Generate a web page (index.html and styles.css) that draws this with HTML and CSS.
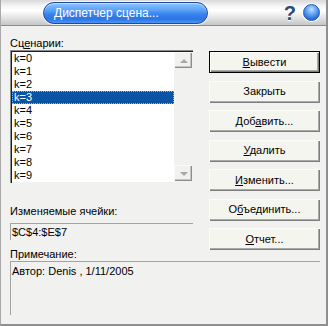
FILE: index.html
```html
<!DOCTYPE html>
<html lang="ru">
<head>
    <meta charset="UTF-8">
    <meta name="viewport" content="width=device-width, initial-scale=1.0">
    <title>Диспетчер сценариев</title>
    <link rel="stylesheet" href="styles.css">
</head>
<body>
    <div class="dialog">
        <header class="titlebar">
            <div class="title-pill">Диспетчер сцена...</div>
            <div class="title-tools">
                <span class="help">?</span>
                <span class="close"></span>
            </div>
        </header>

        <main class="client">
            <div class="left">
                <div class="label">Сц<u>е</u>нарии:</div>
                <div class="listbox">
                    <ul class="items">
                        <li>k=0</li>
                        <li>k=1</li>
                        <li>k=2</li>
                        <li class="selected">k=3</li>
                        <li>k=4</li>
                        <li>k=5</li>
                        <li>k=6</li>
                        <li>k=7</li>
                        <li>k=8</li>
                        <li>k=9</li>
                    </ul>
                    <div class="scrollbar">
                        <span class="sb-btn"><span class="arrow up"></span></span>
                        <span class="sb-btn"><span class="arrow down"></span></span>
                    </div>
                </div>

                <div class="label label-cells">Изменяемые ячейки:</div>
                <div class="field">$C$4:$E$7</div>

                <div class="label label-note">Примечание:</div>
            </div>

            <div class="buttons">
                <button class="btn default"><u>В</u>ывести</button>
                <button class="btn">Закрыть</button>
                <button class="btn">Доб<u>а</u>вить...</button>
                <button class="btn"><u>У</u>далить</button>
                <button class="btn"><u>И</u>зменить...</button>
                <button class="btn">О<u>б</u>ъединить...</button>
                <button class="btn"><u>О</u>тчет...</button>
            </div>

            <div class="note">Автор: Denis , 1/11/2005</div>
        </main>
    </div>
</body>
</html>
```

FILE: styles.css
```css
* {
    box-sizing: border-box;
}

body {
    margin: 0;
    font-family: "Liberation Sans", Arial, sans-serif;
    font-size: 11px;
    line-height: 13px;
    color: #000;
    background: #f1f1f0;
}

u {
    text-decoration: underline;
    text-underline-offset: 1px;
}

.dialog {
    width: 328px;
    height: 326px;
    background: #f1f1f0;
    border-left: 1px solid #a9a9a9;
    border-right: 2px solid #8f8f8f;
    border-bottom: 2px solid #8f8f8f;
}

/* title bar */

.titlebar {
    display: flex;
    align-items: center;
    justify-content: space-between;
    height: 26px;
    padding: 0 6px 0 42px;
    border-bottom: 1px solid #8c8c8c;
    background: linear-gradient(#d9d9d9 0, #f3f3f3 22%, #ffffff 42%, #ececec 62%, #c6c6c6 100%);
}

.title-pill {
    width: 165px;
    height: 22px;
    padding-left: 10px;
    border: 1px solid #1d47a0;
    border-radius: 11px;
    box-shadow: 0 0 0 1px rgba(255, 255, 255, 0.7), inset 0 1px 1px rgba(255, 255, 255, 0.5);
    background: linear-gradient(#8cc2ff 0, #5ca3f8 35%, #3a84ee 55%, #2b74e4 80%, #4b96f6 100%);
    color: #fff;
    font-size: 12px;
    line-height: 20px;
    white-space: nowrap;
}

.title-tools {
    display: flex;
    align-items: center;
    gap: 7px;
}

.help {
    font-family: "Liberation Sans", Arial, sans-serif;
    font-weight: bold;
    font-size: 20px;
    line-height: 20px;
    color: #294c7e;
    text-shadow: 0 1px 0 #fff;
}

.close {
    width: 17px;
    height: 17px;
    border-radius: 50%;
    border: 1px solid #2a5aa8;
    box-shadow: 0 0 0 1px #fff;
    background: radial-gradient(circle at 50% 30%, #bfe0ff 0, #6aaaf6 35%, #2e72dc 70%, #2a66c8 100%);
}

/* client area */

.client {
    display: grid;
    grid-template-columns: 183px 111px;
    column-gap: 16px;
    padding: 11px 6px 0 9px;
}

.left {
    display: flex;
    flex-direction: column;
}

.label-cells {
    margin-top: 22px;
}

.label-note {
    margin-top: 8px;
}

.listbox {
    display: flex;
    height: 133px;
    border-top: 1px solid #8a8a8a;
    border-left: 1px solid #8a8a8a;
    box-shadow: inset 1px 1px 0 #202020;
    padding: 1px 1px 1px 1px;
}

.items {
    flex: 1;
    margin: 0;
    padding: 0;
    list-style: none;
    background: #fff;
}

.items li {
    height: 13px;
    padding-left: 2px;
}

.items li.selected {
    background: #0a54a6;
    color: #fff;
    outline: 1px dotted #f2a531;
    outline-offset: -1px;
}

.scrollbar {
    display: flex;
    flex-direction: column;
    justify-content: space-between;
    width: 18px;
    padding-bottom: 1px;
    background: #f1f1f0;
}

.sb-btn {
    display: flex;
    align-items: center;
    justify-content: center;
    height: 16px;
    border-top: 1px solid #fafafa;
    border-left: 1px solid #fafafa;
    box-shadow: inset -1px -1px 0 #8e8e8e, inset -2px -2px 0 #c4c4c4;
    background: #f1f1f0;
}

.arrow {
    width: 0;
    height: 0;
    border-left: 4px solid transparent;
    border-right: 4px solid transparent;
}

.arrow.up {
    border-bottom: 4px solid #a8a8a8;
}

.arrow.down {
    border-top: 4px solid #a8a8a8;
}

.field {
    height: 17px;
    margin-top: 5px;
    padding: 2px 0 0 1px;
    border-top: 1px solid #a3a3a3;
    border-left: 1px solid #a3a3a3;
}

/* buttons */

.buttons {
    display: flex;
    flex-direction: column;
    gap: 7.5px;
    padding-top: 14px;
}

.btn {
    height: 22px;
    padding: 0 0 1px;
    border: none;
    background: #f5f5ef;
    box-shadow: inset 1px 1px 0 #fdfdf8, inset -1px -1px 0 #7e7e7e, inset -2px -2px 0 #a9a9a9;
    font-family: inherit;
    font-size: 11px;
    color: #000;
}

.btn.default {
    box-shadow: inset 0 0 0 1px #000, inset 2px 2px 0 #fdfdf8, inset -2px -2px 0 #7e7e7e, inset -3px -3px 0 #a9a9a9;
}

/* note */

.note {
    grid-column: 1 / -1;
    height: 54px;
    padding: 3px 0 0 1px;
    border-top: 1px solid #a3a3a3;
    border-left: 1px solid #a3a3a3;
}
```
